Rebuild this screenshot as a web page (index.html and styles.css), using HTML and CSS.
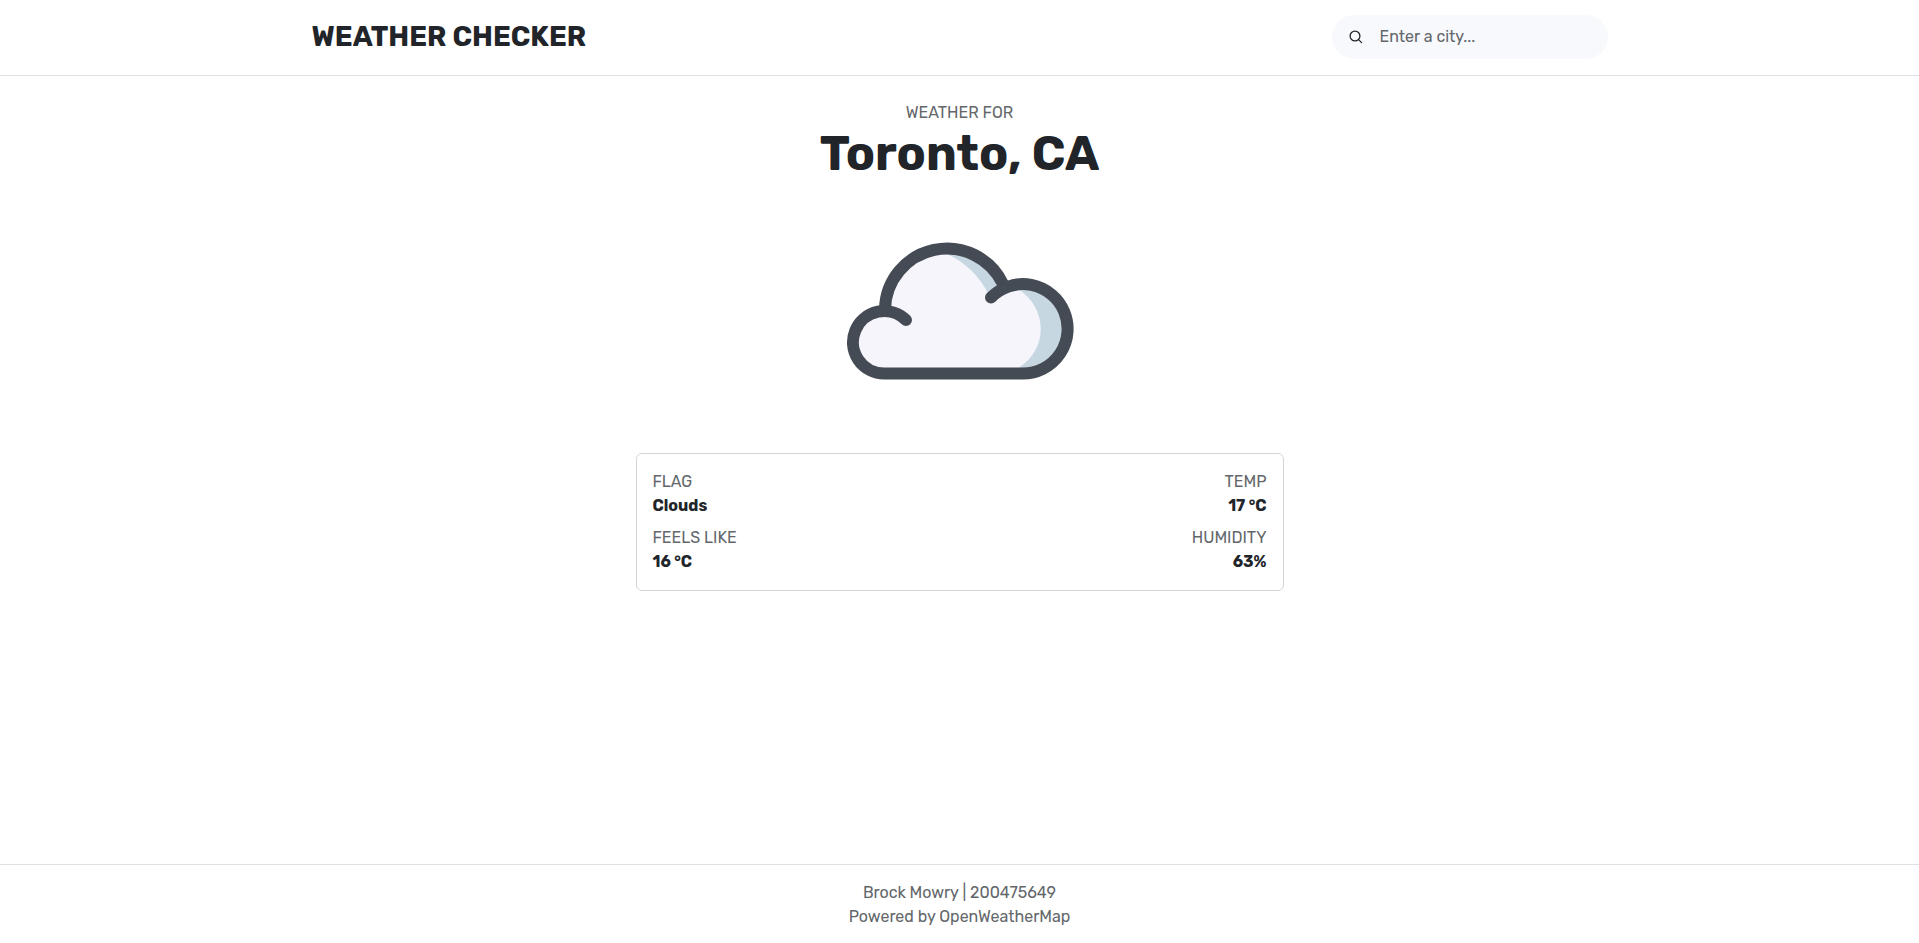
FILE: index.html
```html
<!DOCTYPE html>
<html lang="en">
<head>
<meta charset="utf-8">
<meta name="viewport" content="width=device-width, initial-scale=1">
<title>Weather Checker</title>
<link rel="stylesheet" href="styles.css">
</head>
<body>
<header class="site-header">
  <div class="container">
    <h1 class="brand">WEATHER CHECKER</h1>
    <form class="search" role="search">
      <button class="search-button" type="submit" aria-label="Search">
        <svg viewBox="0 0 14 14" width="14" height="14" fill="none" stroke="currentColor" stroke-width="1.3" stroke-linecap="round"><circle cx="6" cy="6" r="4.9"/><path d="M9.6 9.6 12.6 12.6"/></svg>
      </button>
      <input class="search-input" type="text" aria-label="City" placeholder="Enter a city...">
    </form>
  </div>
</header>
<main class="weather">
  <p class="label">WEATHER FOR</p>
  <h2 class="city">Toronto, CA</h2>
  <svg class="cloud" viewBox="2 -37 256 256" role="img" aria-label="Clouds">
    <path fill="#f6f5fb" d="M54 153.500A31 31 0 0 1 55 91A62 62 0 0 1 173 66A44.700 44.700 0 0 1 193 153.500Z"/>
    <path fill="#c6d7e1" d="M114 33C135 41 149 56 158 73L176 66C165 42 140 26 114 33ZM188 69C217 87 220 129 187 149L193 153.500A44.700 44.700 0 0 0 193 64Z"/>
    <path fill="none" stroke="#454b54" stroke-width="12" stroke-linecap="round" d="M76 100A31.200 31.200 0 1 0 54 153.500H193A44.700 44.700 0 1 0 161 77.500"/>
    <path fill="none" stroke="#454b54" stroke-width="12" d="M55 89A62 62 0 0 1 173 64"/>
  </svg>
  <dl class="card">
    <div class="stat"><dt class="label">FLAG</dt><dd class="value">Clouds</dd></div>
    <div class="stat stat-end"><dt class="label">TEMP</dt><dd class="value">17 °C</dd></div>
    <div class="stat"><dt class="label">FEELS LIKE</dt><dd class="value">16 °C</dd></div>
    <div class="stat stat-end"><dt class="label">HUMIDITY</dt><dd class="value">63%</dd></div>
  </dl>
</main>
<footer class="site-footer">
  <p class="credit">Brock Mowry | 200475649</p>
  <p class="credit">Powered by OpenWeatherMap</p>
</footer>
</body>
</html>
```
FILE: styles.css
```css
* { box-sizing: border-box; }
body {
  margin: 0;
  min-height: 100vh;
  display: flex;
  flex-direction: column;
  background: #fff;
  color: #212529;
  font: 400 16px/24px Rubik, Roboto, sans-serif;
}
h1, h2, p, dl, dd { margin: 0; }
.site-header { border-bottom: 1px solid #dee2e6; }
.container {
  width: 100%;
  max-width: 1320px;
  margin: 0 auto;
  padding: 15px 12px 16px;
  display: flex;
  align-items: center;
  justify-content: space-between;
}
.brand { font-size: 28px; line-height: 44px; font-weight: 700; }
.search {
  display: flex;
  align-items: center;
  width: 276px;
  height: 44px;
  border-radius: 22px;
  background: #f8f9fc;
}
.search-button {
  display: flex;
  border: 0;
  padding: 0 17px;
  background: none;
  color: #212529;
}
.search-input {
  flex: 1;
  min-width: 0;
  border: 0;
  padding: 0 16px 0 0;
  outline: 0;
  background: none;
  font: inherit;
}
.search-input::placeholder { color: #63676b; opacity: 1; }
.weather {
  flex: 1;
  display: flex;
  flex-direction: column;
  align-items: center;
  padding: 25px 12px 24px;
}
.label { color: #63676b; }
.city { font-size: 48px; line-height: 58px; font-weight: 700; }
.cloud { width: 256px; height: 256px; }
.card {
  width: 100%;
  max-width: 648px;
  margin-top: 14px;
  padding: 16px;
  border: 1px solid #d3d4d5;
  border-radius: 6px;
  display: grid;
  grid-template-columns: 1fr 1fr;
  row-gap: 8px;
}
.stat-end { text-align: right; }
.value { font-weight: 700; }
.site-footer {
  padding: 16px 12px 14px;
  border-top: 1px solid #dee2e6;
  text-align: center;
}
.credit { color: #63676b; }
```
